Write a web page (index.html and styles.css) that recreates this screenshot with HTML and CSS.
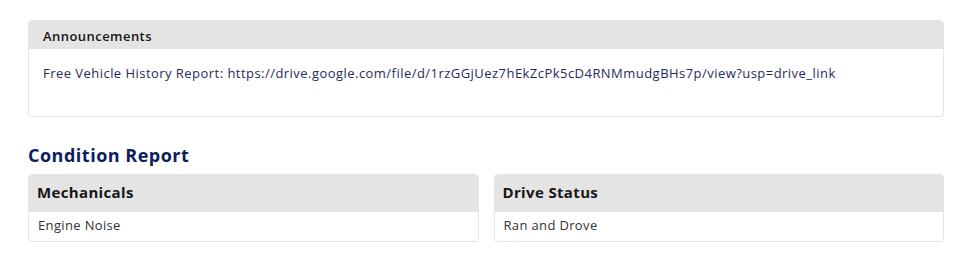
FILE: index.html
```html
<!DOCTYPE html>
<html>
<head>
<meta charset="utf-8">
<link rel="stylesheet" href="styles.css">
</head>
<body>
<div class="page">
  <section class="card announce">
    <div class="card-head small">Announcements</div>
    <div class="card-body announce-body">Free Vehicle History Report: https://drive.google.com/file/d/1rzGGjUez7hEkZcPk5cD4RNMmudgBHs7p/view?usp=drive_link</div>
  </section>
  <h2 class="section-title">Condition Report</h2>
  <div class="grid">
    <section class="card">
      <div class="card-head big">Mechanicals</div>
      <div class="card-body item">Engine Noise</div>
    </section>
    <section class="card">
      <div class="card-head big">Drive Status</div>
      <div class="card-body item">Ran and Drove</div>
    </section>
  </div>
</div>
</body>
</html>
```
FILE: styles.css
```css
* { box-sizing: border-box; }
html, body { margin: 0; padding: 0; background: #fff; }
body { font-family: "Open Sans", "Liberation Sans", sans-serif; }
.page { padding: 20px 23px 0 28px; }
.card {
  border: 1px solid #e4e4e4;
  border-radius: 4px;
  overflow: hidden;
  background: #fff;
}
.card-head { background: #e4e4e4; color: #161616; }
.card-head.small { height: 28px; padding: 6px 14px; font-size: 13px; font-weight: 600; letter-spacing: 0.45px; }
.announce-body { height: 67px; padding: 15px 14px; font-size: 13px; color: #1f2d5c; letter-spacing: 0.46px; }
.section-title {
  margin: 28px 0 0 0;
  height: 29px;
  font-size: 18px;
  font-weight: 700;
  color: #0d1d5e;
  line-height: 20px;
  letter-spacing: 0.5px;
}
.grid { display: grid; grid-template-columns: 1fr 1fr; gap: 15px; }
.card-head.big { height: 37px; padding: 7px 8px; font-size: 15px; font-weight: 700; letter-spacing: 0.35px; }
.item { height: 29px; padding: 4px 9px; font-size: 13px; color: #333; letter-spacing: 0.35px; }
```
